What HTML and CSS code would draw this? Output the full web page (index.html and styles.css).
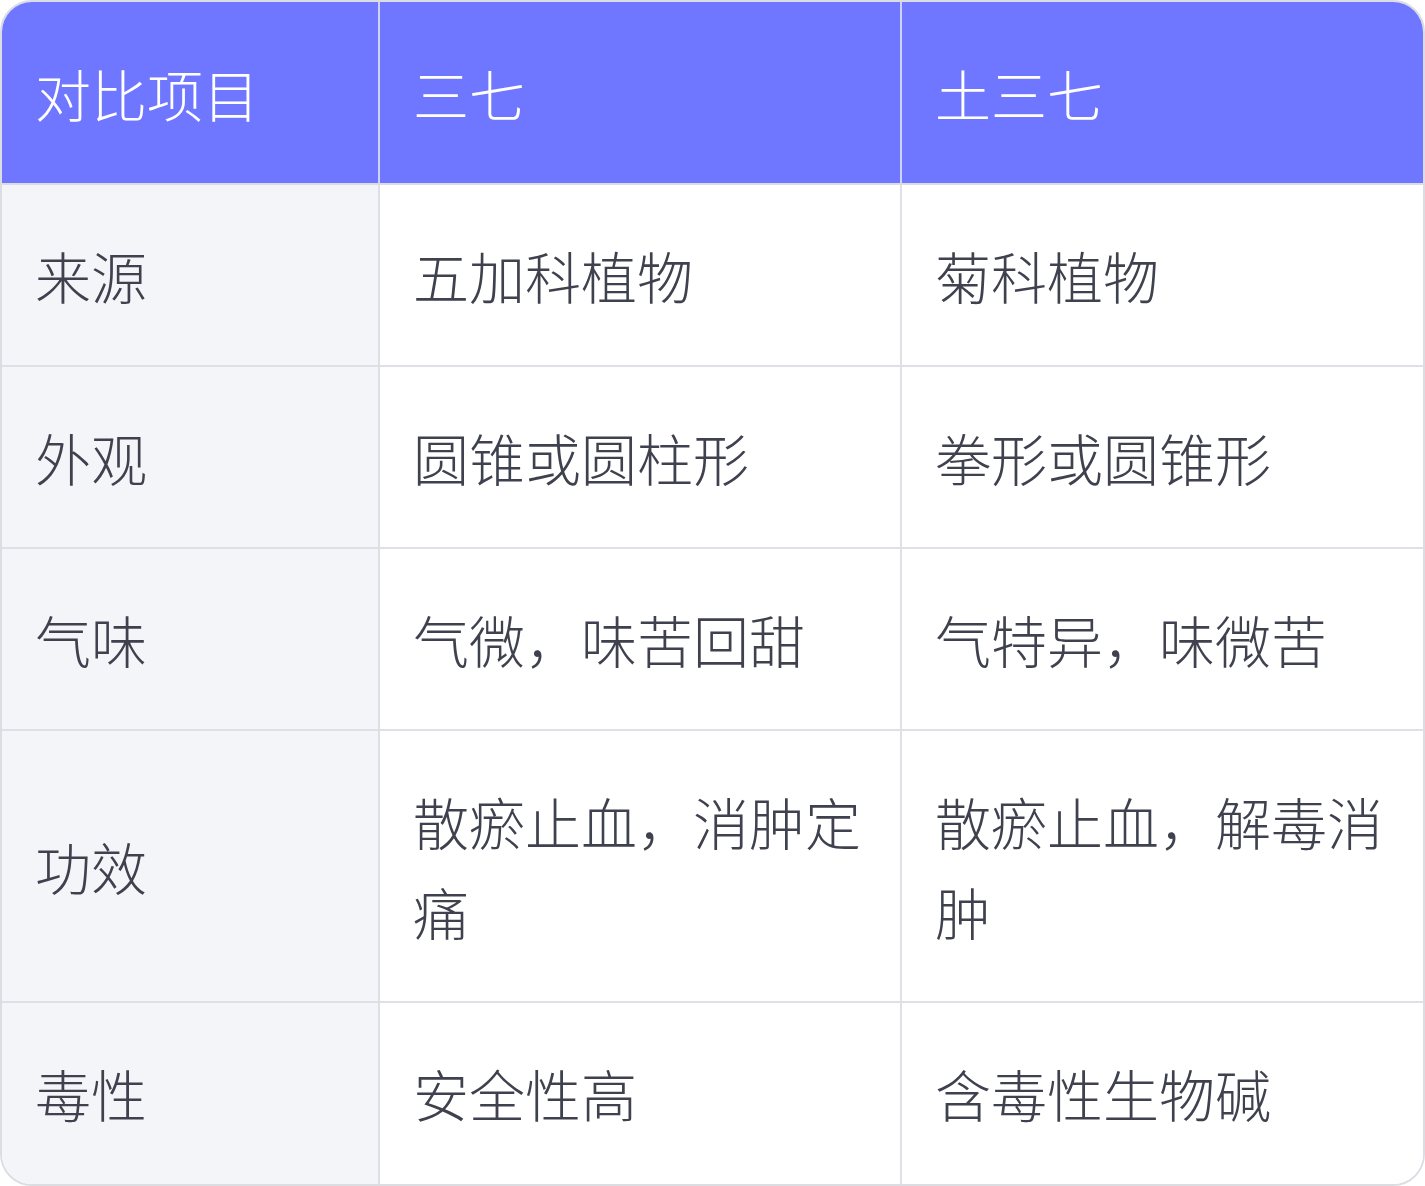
FILE: index.html
```html
<!DOCTYPE html>
<html lang="zh">
<head>
<meta charset="utf-8">
<link rel="stylesheet" href="styles.css">
</head>
<body>
<div class="wrap">
<table class="cmp">
<colgroup><col class="c1"><col class="c2"><col class="c3"></colgroup>
<thead>
<tr><th>对比项目</th><th>三七</th><th>土三七</th></tr>
</thead>
<tbody>
<tr><td>来源</td><td>五加科植物</td><td>菊科植物</td></tr>
<tr><td>外观</td><td>圆锥或圆柱形</td><td>拳形或圆锥形</td></tr>
<tr><td>气味</td><td>气微，味苦回甜</td><td>气特异，味微苦</td></tr>
<tr><td>功效</td><td>散瘀止血，消肿定痛</td><td>散瘀止血，解毒消肿</td></tr>
<tr><td>毒性</td><td>安全性高</td><td>含毒性生物碱</td></tr>
</tbody>
</table>
</div>
</body>
</html>
```
FILE: styles.css
```css
html, body { margin: 0; padding: 0; background: #ffffff; }
.wrap {
  width: 1425px;
  box-sizing: border-box;
  border: 2px solid #dcdde2;
  border-radius: 32px;
  overflow: hidden;
}
.cmp {
  width: 100%;
  border-collapse: collapse;
  table-layout: fixed;
  font-family: "Noto Sans CJK SC", "Noto Sans", sans-serif;
  font-weight: 300;
  font-size: 56px;
  line-height: 90px;
}
.c1 { width: 377px; }
.c2 { width: 522px; }
.c3 { width: auto; }
.cmp th, .cmp td {
  text-align: left;
  vertical-align: middle;
  padding: 45px 33px 45px 33px;
  border: 2px solid #dfe0e5;
}
.cmp tr > :first-child { border-left: none; }
.cmp tr > :last-child { border-right: none; }
.cmp thead th { border-top: none; }
.cmp tbody tr:last-child td { border-bottom: none; padding-bottom: 46px; }
.cmp th {
  background: #6f76ff;
  color: #ffffff;
  font-weight: 300;
  padding-top: 46px;
  padding-bottom: 45px;
  border-left-color: #d0d2f2;
  border-right-color: #d0d2f2;
  border-bottom-color: #dcdde2;
}
.cmp td { color: #3f424e; background: #ffffff; }
.cmp td:first-child { background: #f4f5f9; }
```
